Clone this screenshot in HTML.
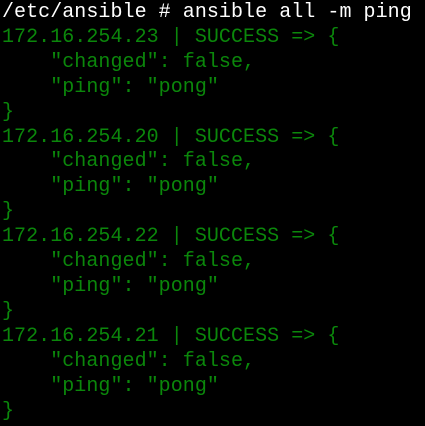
<!DOCTYPE html><html><head><style>
body{margin:0;background:#000;width:425px;height:426px;overflow:hidden}
pre{margin:0;padding:1px 0 0 2px;font-family:"Liberation Mono",monospace;font-size:20px;line-height:24.9px;color:#0b870b;letter-spacing:0.05px}
.w{color:#fff}
</style></head><body><pre><span class="w">/etc/ansible # ansible all -m ping</span>
172.16.254.23 | SUCCESS => {
    "changed": false,
    "ping": "pong"
}
172.16.254.20 | SUCCESS => {
    "changed": false,
    "ping": "pong"
}
172.16.254.22 | SUCCESS => {
    "changed": false,
    "ping": "pong"
}
172.16.254.21 | SUCCESS => {
    "changed": false,
    "ping": "pong"
}</pre></body></html>
